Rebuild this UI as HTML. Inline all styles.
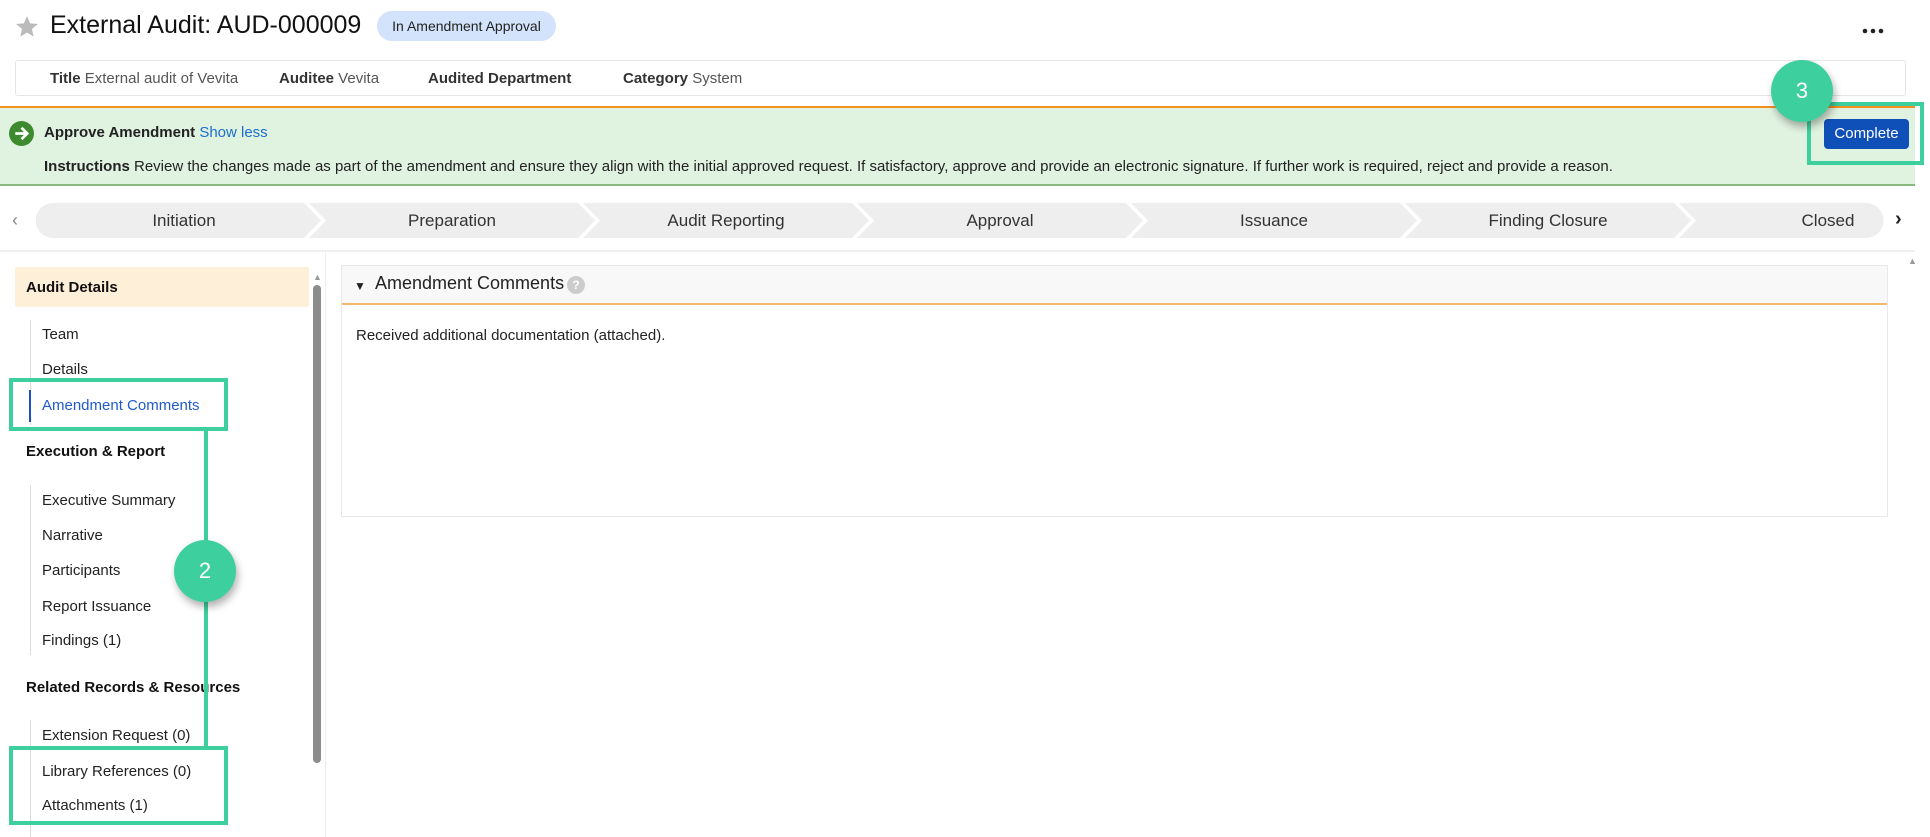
<!DOCTYPE html>
<html><head><meta charset="utf-8"><style>
*{box-sizing:border-box;margin:0;padding:0}
body{width:1930px;height:837px;background:#fff;font-family:"Liberation Sans",sans-serif;color:#222;position:relative;overflow:hidden}
.a{position:absolute;white-space:nowrap}
.nav{position:absolute;left:42px;font-size:15px;color:#222}
.hd{position:absolute;left:26px;font-size:15px;font-weight:bold;color:#111}
.vl{position:absolute;left:30px;width:1px;background:#ddd}
.circ{position:absolute;width:62px;height:62px;border-radius:50%;background:#3ecf9e;color:#fff;font-size:22px;display:flex;align-items:center;justify-content:center;box-shadow:2px 5px 8px rgba(0,0,0,.3)}
.box{position:absolute;border:4px solid #3ecf9e}
</style></head><body>
<svg class="a" style="left:14px;top:14px" width="26" height="26" viewBox="0 0 24 24"><path d="M12 2l2.9 6.6 7.1.6-5.4 4.7 1.6 7-6.2-3.7-6.2 3.7 1.6-7L2 9.2l7.1-.6z" fill="#bbb"/></svg>
<div class="a" style="left:50px;top:11px;font-size:25px;color:#111">External Audit: AUD-000009</div>
<div class="a" style="left:377px;top:11px;width:179px;height:30px;border-radius:15px;background:#d3e3fb;font-size:14px;line-height:30px;text-align:center;color:#222">In Amendment Approval</div>
<svg class="a" style="left:1862px;top:27px" width="24" height="8"><circle cx="3" cy="4" r="2.3" fill="#222"/><circle cx="11" cy="4" r="2.3" fill="#222"/><circle cx="19" cy="4" r="2.3" fill="#222"/></svg>
<div class="a" style="left:15px;top:60px;width:1891px;height:36px;border:1px solid #e6e6e6;border-radius:3px"></div>
<div class="a" style="left:50px;top:70px;font-size:15px;color:#555"><b style="color:#333">Title</b> External audit of Vevita</div>
<div class="a" style="left:279px;top:70px;font-size:15px;color:#555"><b style="color:#333">Auditee</b> Vevita</div>
<div class="a" style="left:428px;top:70px;font-size:15px;color:#333"><b>Audited Department</b></div>
<div class="a" style="left:623px;top:70px;font-size:15px;color:#555"><b style="color:#333">Category</b> System</div>
<div class="a" style="left:0;top:106px;width:1915px;height:80px;background:#e0f2e0;border-top:2px solid #f39020;border-bottom:2px solid #8bb87e"></div>
<svg class="a" style="left:9px;top:121px" width="25" height="25" viewBox="0 0 24 24"><circle cx="12" cy="12" r="12" fill="#3d8b2e"/><path d="M6 12h11M12 6.5l5.5 5.5-5.5 5.5" stroke="#fff" stroke-width="2.6" fill="none"/></svg>
<div class="a" style="left:44px;top:124px;font-size:15px"><b>Approve Amendment</b> <span style="color:#1a6ed0">Show less</span></div>
<div class="a" style="left:44px;top:158px;font-size:15px"><b>Instructions</b> Review the changes made as part of the amendment and ensure they align with the initial approved request. If satisfactory, approve and provide an electronic signature. If further work is required, reject and provide a reason.</div>
<div class="a" style="left:1824px;top:119px;width:85px;height:30px;border-radius:4px;background:#0f4fb8;color:#fff;font-size:15px;line-height:30px;text-align:center">Complete</div>
<div class="box" style="left:1807px;top:102px;width:117px;height:63px"></div>
<div class="circ" style="left:1771px;top:60px">3</div>
<div class="a" style="left:12px;top:210px;font-size:18px;color:#888">‹</div>
<div class="a" style="left:1895px;top:208px;font-size:20px;font-weight:bold;color:#222">›</div>
<svg class="a" style="left:36px;top:203px" width="1848" height="35">
<g fill="#eee">
<path d="M17 0H268L285 17.5 268 35H17A17 17 0 0 1 17 0Z"/>
<path d="M273 0H542L559 17.5 542 35H273L290 17.5Z"/>
<path d="M547 0H816L833 17.5 816 35H547L564 17.5Z"/>
<path d="M821 0H1090L1107 17.5 1090 35H821L838 17.5Z"/>
<path d="M1095 0H1364L1381 17.5 1364 35H1095L1112 17.5Z"/>
<path d="M1369 0H1638L1655 17.5 1638 35H1369L1386 17.5Z"/>
<path d="M1643 0H1830A17 17 0 0 1 1830 35H1643L1660 17.5Z"/>
</g>
<g font-family="Liberation Sans" font-size="17" fill="#333" text-anchor="middle">
<text x="148" y="23">Initiation</text><text x="416" y="23">Preparation</text><text x="690" y="23">Audit Reporting</text><text x="964" y="23">Approval</text><text x="1238" y="23">Issuance</text><text x="1512" y="23">Finding Closure</text><text x="1792" y="23">Closed</text>
</g></svg>
<div class="a" style="left:0;top:250px;width:1915px;height:2px;background:#f0f0f0"></div>
<div class="a" style="left:325px;top:252px;width:1px;height:585px;background:#eee"></div>
<div class="a" style="left:15px;top:267px;width:294px;height:40px;background:#feefd8;border-radius:2px"></div>
<div class="hd" style="top:279px">Audit Details</div>
<div class="vl" style="top:320px;height:105px"></div>
<div class="a" style="left:29px;top:390px;width:2px;height:32px;background:#1f4fbf"></div>
<div class="nav" style="top:326px">Team</div>
<div class="nav" style="top:361px">Details</div>
<div class="nav" style="top:397px;color:#1f5bcc">Amendment Comments</div>
<div class="hd" style="top:443px">Execution &amp; Report</div>
<div class="vl" style="top:485px;height:170px"></div>
<div class="nav" style="top:492px">Executive Summary</div>
<div class="nav" style="top:527px">Narrative</div>
<div class="nav" style="top:562px">Participants</div>
<div class="nav" style="top:598px">Report Issuance</div>
<div class="nav" style="top:632px">Findings (1)</div>
<div class="hd" style="top:679px">Related Records &amp; Resources</div>
<div class="vl" style="top:720px;height:117px"></div>
<div class="nav" style="top:727px">Extension Request (0)</div>
<div class="nav" style="top:763px">Library References (0)</div>
<div class="nav" style="top:797px">Attachments (1)</div>
<div class="a" style="left:313px;top:272px;font-size:9px;color:#999">▲</div>
<div class="a" style="left:313px;top:285px;width:8px;height:478px;border-radius:4px;background:#8c8c8c"></div>
<div class="box" style="left:9px;top:378px;width:219px;height:53px"></div>
<div class="a" style="left:204px;top:431px;width:4px;height:316px;background:#3ecf9e"></div>
<div class="box" style="left:9px;top:746px;width:219px;height:79px"></div>
<div class="circ" style="left:174px;top:540px">2</div>
<div class="a" style="left:341px;top:265px;width:1547px;height:252px;border:1px solid #e8e8e8"></div>
<div class="a" style="left:342px;top:266px;width:1545px;height:39px;background:#f8f8f8;border-bottom:2px solid #f5b870"></div>
<div class="a" style="left:354px;top:279px;font-size:12px">▼</div>
<div class="a" style="left:375px;top:273px;font-size:18px;color:#222">Amendment Comments</div>
<div class="a" style="left:567px;top:276px;width:18px;height:18px;border-radius:50%;background:#ccc;color:#fff;font-size:12px;font-weight:bold;text-align:center;line-height:18px">?</div>
<div class="a" style="left:356px;top:327px;font-size:15px">Received additional documentation (attached).</div>
<div class="a" style="left:1908px;top:256px;font-size:9px;color:#999">▲</div>
</body></html>
